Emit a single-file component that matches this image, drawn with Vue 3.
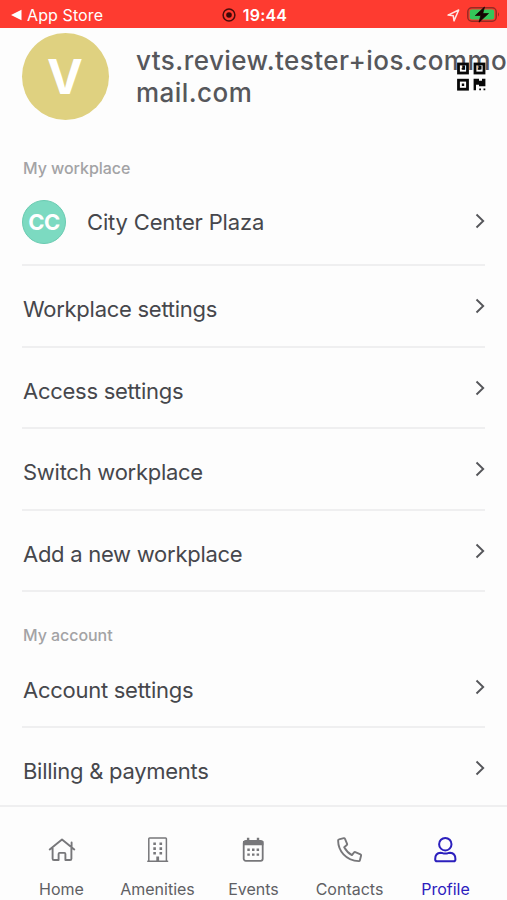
<script setup>
const workplaceRows = ['Workplace settings', 'Access settings', 'Switch workplace', 'Add a new workplace']
const accountRows = ['Account settings', 'Billing & payments']
const tabs = ['Home', 'Amenities', 'Events', 'Contacts', 'Profile']
</script>

<template>
  <div class="screen">
    <header class="status">
      <div class="back">
        <svg width="11" height="12" viewBox="0 0 11 12"><path d="M0 6 10.500 .8v10.400z" fill="#fff" /></svg>
        <span>App Store</span>
      </div>
      <div class="clock">
        <svg width="14" height="14" viewBox="0 0 14 14">
          <circle cx="7" cy="7" r="5.900" fill="none" stroke="#4b0d0b" stroke-width="1.500" />
          <circle cx="7" cy="7" r="2.800" fill="#3b0807" />
        </svg>
        <span>19:44</span>
      </div>
      <div class="indicators">
        <svg width="13" height="13" viewBox="0 0 13 13"><path d="M1 6.100 11.700 1 7 11.900 6.300 6.800z" fill="none" stroke="#ffe5e2" stroke-width="1.500" stroke-linejoin="round" /></svg>
        <svg width="33" height="18" viewBox="0 0 33 18">
          <rect x=".8" y="1.800" width="28.400" height="13.400" rx="4" fill="none" stroke="#972b24" stroke-width="1.500" />
          <rect x="2.800" y="3.500" width="24.400" height="10" rx="2" fill="#34c759" />
          <path d="M31 6.300q2 2.200 0 4.400z" fill="#972b24" />
          <path d="M17.500 1 8.300 9.500h5.500l-1.800 6.700L21.500 7.500h-5.700z" fill="#160503" stroke="#160503" stroke-width=".7" />
        </svg>
      </div>
    </header>

    <main>
      <section class="identity">
        <div class="avatar">V</div>
        <div class="email">vts.review.tester+ios.commo<br>mail.com</div>
        <svg class="qr" width="30" height="30" viewBox="0 0 30 30">
          <g fill="none" stroke="#080808" stroke-width="2.800">
            <rect x="1.500" y="2" width="9" height="9" />
            <rect x="18" y="2" width="9" height="9" />
            <rect x="1.500" y="18.200" width="9" height="9" />
          </g>
          <path d="M5.500 4h2.500v3.500H4.700V6h.8zM22 4h2.500v3.500h-3.300V6h.8zM4.800 21.500h2.400v2.400H4.800zM16.600 16.800h5.400v2h3v-2h3.400v7.500h-6.400v-1.500h-3v5.500h-2.400zM22.200 26.500h1.800v1.800h-1.800zM26.500 26.500h1.800v1.800h-1.800z" fill="#080808" />
        </svg>
      </section>

      <h2>My workplace</h2>
      <div class="row place">
        <div class="badge">CC</div>
        <span>City Center Plaza</span>
        <svg class="chevron" width="10" height="16" viewBox="0 0 10 16"><path d="m1.500 1.500 6.700 6.500-6.700 6.500" /></svg>
      </div>
      <div v-for="row in workplaceRows" :key="row" class="row">
        <span>{{ row }}</span>
        <svg class="chevron" width="10" height="16" viewBox="0 0 10 16"><path d="m1.500 1.500 6.700 6.500-6.700 6.500" /></svg>
      </div>

      <h2 class="account-title">My account</h2>
      <div v-for="row in accountRows" :key="row" class="row account">
        <span>{{ row }}</span>
        <svg class="chevron" width="10" height="16" viewBox="0 0 10 16"><path d="m1.500 1.500 6.700 6.500-6.700 6.500" /></svg>
      </div>
    </main>

    <nav>
      <div v-for="tab in tabs" :key="tab" class="tab" :class="{ active: tab === 'Profile' }">
        <svg width="28" height="28" viewBox="0 0 28 28" fill="none" stroke="currentColor" stroke-width="1.900" stroke-linejoin="round" stroke-linecap="round">
          <path v-if="tab === 'Home'" d="M1.700 13.500 14 3.500 26.300 13.500M4.600 12v10.700q0 1.300 1.300 1.300h4.700v-6.100q0-1 1-1h4.800q1 0 1 1V24h4.700q1.300 0 1.300-1.300V12M23.600 6.500v4.700" />
          <g v-else-if="tab === 'Amenities'">
            <path d="M4.800 25V2.800q0-.8.800-.8h16q.8 0 .8.800V25M3.800 25.200h19.800" stroke-width="1.500" />
            <path d="M9.300 6.500h2.600v2.600H9.300zM15.500 6.500h2.600v2.600h-2.600zM9.300 11.300h2.600v2.600H9.300zM15.500 11.300h2.600v2.600h-2.600zM9.300 16h2.600v2.600H9.300zM15.500 16h2.600v2.600h-2.600zM12.300 20.500h2.800V25h-2.800z" fill="currentColor" stroke="none" />
          </g>
          <g v-else-if="tab === 'Events'">
            <rect x="3.700" y="5" width="19" height="19.800" rx="2" stroke-width="1.800" />
            <path d="M3 5h20.400v4.200H3zM6.900 1.700h2.400V6H6.900zM16.800 1.700h2.400V6h-2.400zM7.300 12.600h2.500V15H7.300zM12 12.600h2.500V15H12zM16.600 12.600h2.500V15h-2.500zM7.300 17.400h2.500v2.400H7.300zM12 17.400h2.500v2.400H12zM16.600 17.400h2.500v2.400h-2.500z" fill="currentColor" stroke="none" />
          </g>
          <path v-else-if="tab === 'Contacts'" d="M3 3.400 7.800 2.200q.8-.2 1.200.6l2.100 5.100q.3.700-.3 1.200L8.200 11.300q2.800 5.200 7.700 7.800l2.200-2.700q.5-.6 1.200-.3l5.200 2.200q.8.400.6 1.200l-1.200 4.700q-.2.900-1.100.9-9.300-.2-15.300-6.700Q2.200 12.500 2.100 4.500q0-.9.900-1.100Z" />
          <g v-else stroke-width="2">
            <circle cx="13.300" cy="8.200" r="6.200" />
            <path d="M8.600 16.700q1.200 0 2.300.5 2.400.8 4.800 0 1.100-.5 2.300-.5 5.400.3 5.400 6.200v.5q0 1.800-1.800 1.800H5q-1.800 0-1.800-1.800v-.5q0-5.900 5.400-6.200Z" />
          </g>
        </svg>
        <span>{{ tab }}</span>
      </div>
    </nav>
  </div>
</template>

<style>
body { margin: 0; background: #fdfdfd; }
</style>

<style scoped>
* { box-sizing: border-box; }
svg { display: block; flex: none; }
.screen { display: flex; flex-direction: column; width: 507px; height: 900px; overflow: hidden; background: #fdfdfd; color: #46474c; font-family: Inter, sans-serif; }
.status { display: grid; grid-template-columns: 1fr auto 1fr; flex: none; align-items: center; height: 28px; padding: 2px 7px 0 11px; background: #fe3b30; color: #fff; font-size: 16px; line-height: 26px; }
.back, .clock, .indicators { display: flex; align-items: center; }
.back { gap: 5px; letter-spacing: .1px; }
.clock { gap: 7px; margin-left: -2px; font-weight: 600; }
.clock span { letter-spacing: .2px; }
.indicators { justify-content: flex-end; gap: 7px; }
main { flex: none; height: 777px; padding: 0 22px; }
.identity { position: relative; display: flex; height: 120px; padding-top: 5px; }
.avatar { display: grid; place-items: center; flex: none; width: 87px; height: 87px; padding-right: 1px; border-radius: 50%; background: #dfd180; color: #fff; font-size: 48px; font-weight: 700; }
.email { margin: 12px 0 0 27px; white-space: nowrap; color: #56575b; font-size: 26px; line-height: 32px; font-weight: 500; letter-spacing: .45px; }
.qr { position: absolute; top: 34px; right: -2px; }
h2 { height: 40px; margin: 0; padding: 10px 0 0 1px; color: #a3a3a5; font-size: 16px; line-height: 20px; font-weight: 500; letter-spacing: -.05px; }
.row { display: flex; justify-content: space-between; align-items: center; height: 81.600px; border-bottom: 2px solid #efeff0; font-size: 22px; line-height: 30px; padding: 7px 0 0 1px; letter-spacing: -.27px; }
.chevron { fill: none; stroke: #55565a; stroke-width: 1.900; margin: -6px 0 0; }
.place { height: 78px; padding: 0 0 8px; letter-spacing: -.17px; }
.place .chevron { margin: -2px 0 0 auto; }
.badge { display: grid; place-items: center; width: 44px; height: 44px; margin-right: 21px; border: 1.500px solid #6acbb1; border-radius: 50%; background: #7cdac1; color: #fff; font-size: 22px; font-weight: 700; letter-spacing: -.5px; }
.account-title { height: 54px; padding-top: 33px; }
.account:last-child { border-bottom-color: transparent; }
nav { display: grid; grid-template-columns: repeat(5, 96px); justify-content: center; flex: none; height: 95px; padding-top: 29px; border-top: 2px solid #efeff0; }
.tab { display: flex; flex-direction: column; align-items: center; gap: 15px; color: #77777a; font-size: 16px; line-height: 20px; }
.tab span { color: #606064; }
.tab.active, .tab.active span { color: #2c20bd; }
</style>
